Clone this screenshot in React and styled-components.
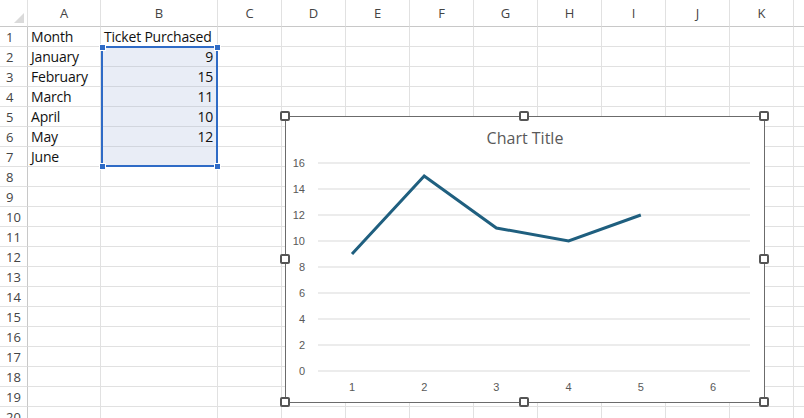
import React from "react";
import styled, { createGlobalStyle } from "styled-components";

const G = createGlobalStyle`
  body { margin:0; background:#fff; font-family:"Liberation Sans", Arial, sans-serif; overflow:hidden; }
`;
const cols = [28, 73, 117, 64, 64, 64, 64, 64, 64, 64, 64, 64, 30];
const letters = ["", "A", "B", "C", "D", "E", "F", "G", "H", "I", "J", "K", "L"];
const Sheet = styled.div`
  position: relative; width: 804px; height: 418px; overflow: hidden;
  display: grid; grid-template-columns: ${cols.map((c) => c + "px").join(" ")};
  grid-template-rows: 27px repeat(20, 20px);
  font-family: "Open Sans", "Noto Sans", sans-serif;
`;
const Head = styled.div`
  background: #fff; color: #444; font-size: 13px; display:flex; align-items:center;
  justify-content: center; border-right: 1px solid #e1e1e1; border-bottom: 1px solid #c8c8c8;
  box-sizing: border-box;
`;
const Corner = styled(Head)`
  position: relative;
  &::after { content:""; position:absolute; right:3px; bottom:3px; border-left:10px solid transparent; border-bottom:10px solid #dadada; }
`;
const RowHead = styled.div`
  color: #444; font-size: 13px; display:flex; align-items:center; justify-content:flex-start;
  padding-left: 6px; border-right: 1px solid #c8c8c8; border-bottom: 1px solid #e1e1e1; box-sizing:border-box;
`;
const Cell = styled.div`
  font-family: "Open Sans", sans-serif; font-size: 14px; color:#111;
  display:flex; align-items:center; justify-content:${(p) => (p.$num ? "flex-end" : "flex-start")};
  padding: 0 4px 0 3px; box-sizing:border-box; white-space:nowrap; letter-spacing:-0.2px;
  border-right: 1px solid #e1e1e1; border-bottom: 1px solid #e1e1e1;
  background: ${(p) => (p.$sel ? "#e9edf6" : "#fff")};
  border-color: ${(p) => (p.$sel ? "#d2d6de" : "#e1e1e1")};
`;
const Selection = styled.div`
  position:absolute; left:101px; top:46px; width:117px; height:121px; box-sizing:border-box;
  border:2px solid #2f6bc6; pointer-events:none;
`;
const Knob = styled.div`
  position:absolute; width:5px; height:5px; background:#2f6bc6; border:1px solid #fff;
  left:${(p) => p.$x}px; top:${(p) => p.$y}px;
`;
const Chart = styled.div`
  position:absolute; left:285px; top:116px; width:480px; height:287px; box-sizing:border-box;
  border:1px solid #6b6b6b; background:#fff;
`;
const Title = styled.div`
  text-align:center; margin-top:10px; font-size:16px; font-weight:500; color:#595959; font-family:"Open Sans", sans-serif;
`;
const Handle = styled.div`
  position:absolute; width:10px; height:10px; box-sizing:border-box; background:#fff;
  border:2px dashed #555; border-radius:2px;
  left:${(p) => p.$x - 6}px; top:${(p) => p.$y - 6}px;
`;

const data = [["Month", "Ticket Purchased"], ["January", 9], ["February", 15], ["March", 11], ["April", 10], ["May", 12], ["June", ""]];

export default function App() {
  const cells = [];
  letters.forEach((l, i) => cells.push(i === 0 ? <Corner key={"h" + i} /> : <Head key={"h" + i}>{l}</Head>));
  for (let r = 1; r <= 20; r++) {
    cells.push(<RowHead key={"r" + r}>{r}</RowHead>);
    for (let c = 1; c < letters.length; c++) {
      let v = "";
      const d = data[r - 1];
      if (d && c <= 2) v = d[c - 1];
      const sel = c === 2 && r >= 2 && r <= 7;
      cells.push(<Cell key={r + "-" + c} $sel={sel} $num={sel}>{v}</Cell>);
    }
  }
  const vals = [9, 15, 11, 10, 12];
  const px = (i) => 352 - 285 + i * 72.2;
  const py = (v) => 371 - 116 - v * 13;
  const ticks = [0, 2, 4, 6, 8, 10, 12, 14, 16];
  return (
    <>
      <G />
      <Sheet>
        {cells}
        <Selection>
          <Knob $x={-4} $y={-4} /><Knob $x={111} $y={-4} /><Knob $x={-4} $y={115} /><Knob $x={111} $y={115} />
        </Selection>
        <Chart>
          <Title>Chart Title</Title>
          <svg width="480" height="287" style={{ position: "absolute", left: -1, top: -1 }}>
            {ticks.map((t) => (
              <g key={t}>
                <line x1="33" x2="465" y1={py(t)} y2={py(t)} stroke="#d9d9d9" strokeWidth="1" />
                <text x="20" y={py(t) + 4} fontSize="11" fill="#595959" textAnchor="end" fontFamily="Liberation Sans, sans-serif">{t}</text>
              </g>
            ))}
            {[1, 2, 3, 4, 5, 6].map((n, i) => (
              <text key={n} x={px(i)} y="275" fontSize="11" fill="#595959" textAnchor="middle" fontFamily="Liberation Sans, sans-serif">{n}</text>
            ))}
            <polyline points={vals.map((v, i) => `${px(i)},${py(v)}`).join(" ")} fill="none" stroke="#1f5f7f" strokeWidth="3" strokeLinejoin="miter" />
          </svg>
          {[[0, 0], [239, 0], [479, 0], [0, 143], [479, 143], [0, 286], [239, 286], [479, 286]].map(([x, y], i) => (
            <Handle key={i} $x={x} $y={y} />
          ))}
        </Chart>
      </Sheet>
    </>
  );
}
